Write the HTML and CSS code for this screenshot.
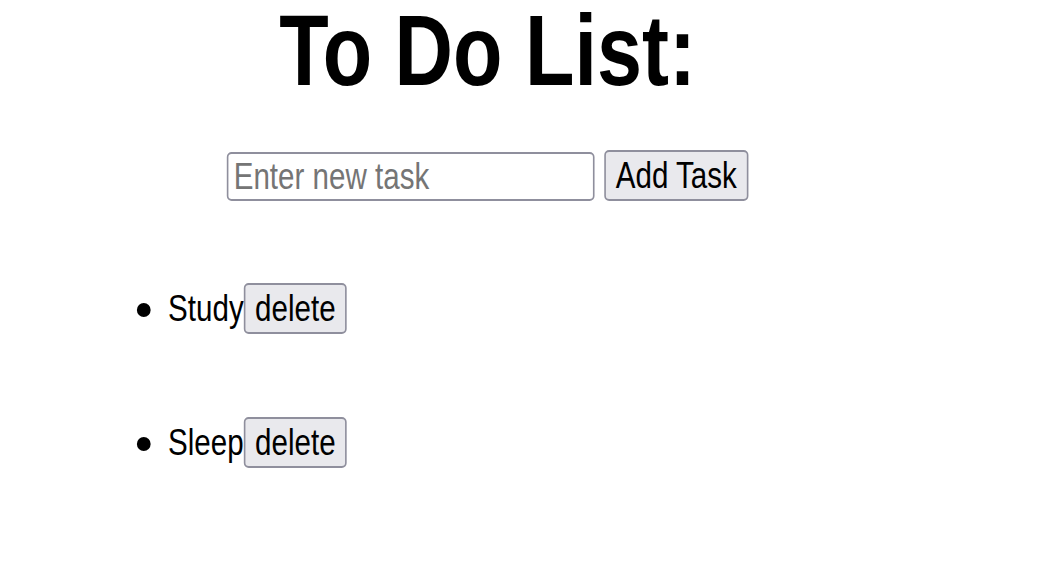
FILE: index.html
```html
<!DOCTYPE html>
<html lang="en">
<head>
<meta charset="utf-8">
<title>To Do List</title>
<link rel="stylesheet" href="styles.css">
</head>
<body>
<div class="page">
  <h1 class="title">To Do List:</h1>
  <form class="add-form">
    <input class="task-input" type="text" placeholder="Enter new task">
    <button class="btn add-btn" type="button">Add Task</button>
  </form>
  <ul class="task-list">
    <li class="task"><span class="task-name">Study</span><button class="btn del-btn" type="button">delete</button></li>
    <li class="task"><span class="task-name">Sleep</span><button class="btn del-btn" type="button">delete</button></li>
  </ul>
</div>
</body>
</html>
```

FILE: styles.css
```css
* { box-sizing: border-box; }
html, body { margin: 0; padding: 0; background: #fff; }
body {
  font-family: "Liberation Sans", Arial, sans-serif;
  color: #000;
}
.page {
  width: 1048px;
  padding-left: 156px;
  transform: scaleX(0.81);
  transform-origin: 0 0;
}
.title {
  margin: 0;
  font-size: 100px;
  line-height: 100px;
  font-weight: 700;
  text-align: center;
}
.add-form {
  display: flex;
  justify-content: center;
  align-items: flex-start;
  gap: 12px;
  margin: 50px 0 0;
}
.task-input {
  width: 454px;
  height: 49px;
  margin-top: 2px;
  padding: 0 4px 0 6.5px;
  font: 36.5px "Liberation Sans", Arial, sans-serif;
  color: #000;
  background: #fff;
  border-style: solid;
  border-color: #8f8f9d;
  border-width: 2px 2.5px;
  border-radius: 6px / 5px;
  outline: none;
}
.task-input::placeholder { color: #757575; opacity: 1; }
.btn {
  font: 36.5px "Liberation Sans", Arial, sans-serif;
  color: #000;
  background: #e9e9ed;
  border-style: solid;
  border-color: #8f8f9d;
  border-width: 2px 2.5px;
  border-radius: 6px / 5px;
  height: 51px;
  padding: 0;
  text-align: center;
}
.add-btn { width: 178px; }
.task-list {
  list-style: none;
  margin: 82px 0 0;
  padding: 0;
}
.task {
  display: flex;
  align-items: baseline;
  padding-left: 13px;
  font-size: 36.5px;
}
.task + .task { margin-top: 83px; }
.task::before {
  content: "";
  width: 17px;
  height: 14px;
  border-radius: 50%;
  background: #000;
  margin-right: 21.5px;
  align-self: center;
  margin-top: 3px;
}
.del-btn { width: 127.5px; }
```
